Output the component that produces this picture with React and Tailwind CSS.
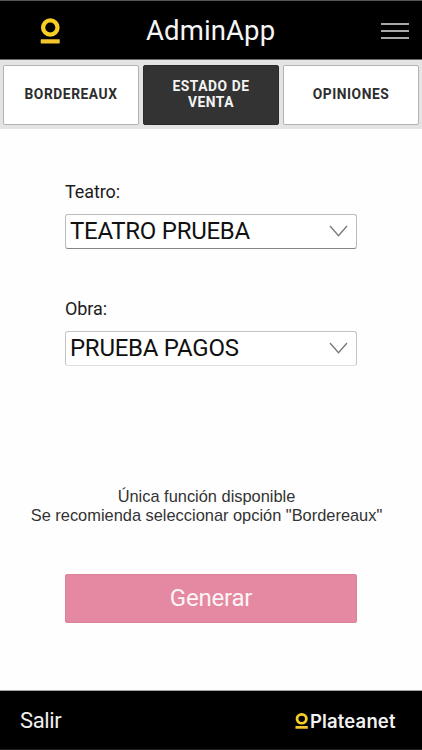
import React from 'react';

function RingMark({ className }) {
  return (
    <svg className={className} viewBox="0 0 20 26" fill="none" preserveAspectRatio="none">
      <circle cx="10.3" cy="9.5" r="7.2" stroke="#f8cd24" strokeWidth="4.3" />
      <rect x="0.7" y="21.3" width="19" height="4.1" rx="0.4" fill="#f4c52c" />
    </svg>
  );
}

function Header() {
  return (
    <header className="flex h-[60px] items-start border-b border-t border-b-[#6a6a6a] border-t-[#555] bg-black">
      <RingMark className="ml-[40px] mt-[17px] h-[26px] w-[20px] shrink-0" />
      <h1 className="ml-[86px] mt-[12px] h-9 w-[180px] whitespace-nowrap text-[27.5px] font-normal leading-9 tracking-[0.12px] text-[#f5f5f5]">
        AdminApp
      </h1>
      <div className="ml-[55px] mt-[21px] flex w-[28px] shrink-0 flex-col gap-[5px] pt-[1px]">
        <span className="h-[2px] bg-[#a8a8a8]" />
        <span className="h-[2px] bg-[#a8a8a8]" />
        <span className="h-[2px] bg-[#a8a8a8]" />
      </div>
    </header>
  );
}

function Tab({ children, active }) {
  return (
    <button
      className={
        'flex h-[60px] items-center justify-center rounded-[2px] border pb-[2px] text-center text-[13.8px] font-bold leading-4 tracking-[0.55px] ' +
        (active
          ? 'border-[#2a2a2a] bg-[#333] text-[#f4f4f4]'
          : 'border-[#b2b2b2] bg-white text-[#2d2d2d]')
      }
    >
      <span>{children}</span>
    </button>
  );
}

function Select({ label, value, className, boxClass }) {
  return (
    <div className={className}>
      <div className="h-6 text-[18px] leading-6 tracking-[-0.1px] text-[#1c1c1c]">{label}</div>
      <div
        className={
          'mt-[10px] flex h-[35px] items-center justify-between rounded-[3px] border bg-white pl-[4px] pr-[8px] ' + boxClass
        }
      >
        <span className="whitespace-nowrap text-[24px] leading-[33px] tracking-[-0.27px] text-[#111]">{value}</span>
        <svg className="mb-[2px] h-[12px] w-[19px]" viewBox="0 0 19 12" fill="none">
          <path d="M1 1 L9.5 10.8 L18 1" stroke="#777" strokeWidth="1.3" />
        </svg>
      </div>
    </div>
  );
}

export default function App() {
  return (
    <div className="flex h-[750px] w-[422px] flex-col overflow-hidden bg-[#fefefe] font-['Roboto',sans-serif]">
      <Header />
      <nav className="grid h-[69px] grid-cols-[136px_136px_136px] gap-x-[4px] bg-[#e4e4e4] pl-[3px] pt-[5px]">
        <Tab>BORDEREAUX</Tab>
        <Tab active>
          ESTADO DE
          <br />
          VENTA
        </Tab>
        <Tab>OPINIONES</Tab>
      </nav>
      <main className="flex flex-1 flex-col px-[65px]">
        <Select label="Teatro:" value="TEATRO PRUEBA" className="mt-[51px]" boxClass="border-[#bcbcbc] border-b-[#858585]" />
        <Select label="Obra:" value="PRUEBA PAGOS" className="mt-[48px]" boxClass="border-[#c4c4c4] border-b-[#dedede]" />
        <p className="-ml-[54px] -mr-[45px] mt-[121px] whitespace-nowrap text-center font-['Liberation_Sans',Arial,sans-serif] text-[16.4px] leading-[19px] text-[#333]">
          Única función disponible
          <br />
          Se recomienda seleccionar opción "Bordereaux"
        </p>
        <button className="mt-[49px] h-[49px] rounded-[2px] border border-[#d98299] bg-[#e489a1] text-[24px] leading-[47px] tracking-[-0.2px] text-[#fdf4f6]">
          Generar
        </button>
      </main>
      <footer className="flex h-[60px] items-center justify-between border-b border-t border-b-[#1d1d1d] border-t-[#a0a4a4] bg-black pl-[20px] pr-[25px] pt-[2px]">
        <span className="text-[22px] leading-7 tracking-[-0.4px] text-[#f0f0f0]">Salir</span>
        <div className="flex items-center">
          <RingMark className="mb-[1px] h-[16px] w-[13px]" />
          <span className="ml-[2px] w-[87px] whitespace-nowrap font-['Inter',sans-serif] text-[18.5px] font-semibold leading-6 tracking-[0.15px] text-[#f2f2f2]">
            Plateanet
          </span>
        </div>
      </footer>
    </div>
  );
}
